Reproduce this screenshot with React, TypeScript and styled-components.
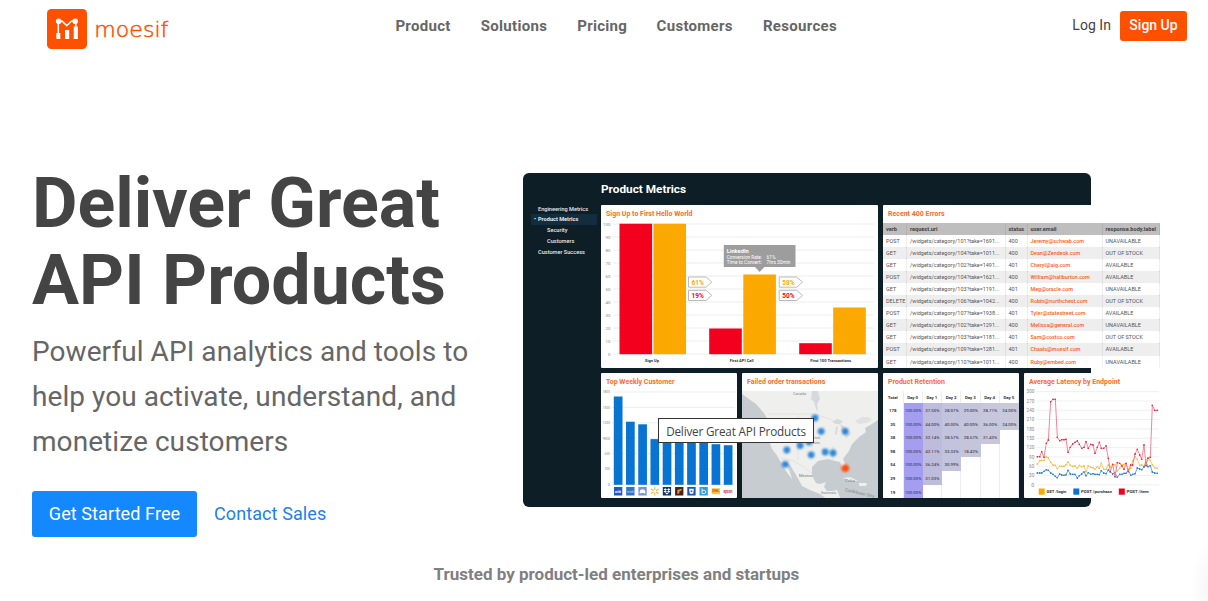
import React from "react";
import styled, { createGlobalStyle } from "styled-components";

const GlobalStyle = createGlobalStyle`
  * { box-sizing: border-box; }
  body { margin: 0; background: #fff; font-family: Roboto, "Liberation Sans", sans-serif; overflow: hidden; }
`;

const Page = styled.div`
  position: relative;
  width: 1208px;
  height: 601px;
  display: flex;
  flex-direction: column;
  overflow: hidden;
`;

const Header = styled.header`
  display: grid;
  grid-template-columns: 348.4px 441.6px 1fr;
  height: 51px;
  padding: 9px 21px 0 47px;
`;

const Brand = styled.a`
  display: flex;
  gap: 7px;
  height: 40px;
`;

const Nav = styled.nav`
  display: flex;
  justify-content: space-between;
  height: 34px;
  align-items: center;
`;

const NavLink = styled.a<{ $width: number }>`
  width: ${(p) => p.$width}px;
  white-space: nowrap;
  font-size: 15px;
  font-weight: 700;
  letter-spacing: 0.3px;
  color: #666;
`;

const Account = styled.div`
  display: flex;
  justify-content: flex-end;
  gap: 9px;
  padding-top: 2px;
`;

const LogIn = styled.a`
  font-size: 14px;
  line-height: 29px;
  letter-spacing: 0.05px;
  color: #444;
`;

const SignUp = styled.a`
  width: 67px;
  height: 30px;
  border-radius: 3px;
  background: #ff5000;
  color: #fff;
  font-size: 14px;
  font-weight: 500;
  line-height: 29px;
  text-align: center;
`;

const Hero = styled.main`
  display: grid;
  grid-template-columns: 491px 1fr;
  height: 513px;
  padding: 113px 0 0 32px;
`;

const Copy = styled.section``;

const Title = styled.h1`
  margin: 0;
  padding-top: 1px;
  font-size: 70px;
  line-height: 77px;
  font-weight: 700;
  color: #444;
  white-space: nowrap;
`;

const Lead = styled.p`
  margin: 10px 0 0;
  font-size: 28px;
  line-height: 45px;
  letter-spacing: 0.07px;
  color: #666;
  white-space: nowrap;
`;

const Actions = styled.div`
  display: flex;
  gap: 17px;
  margin-top: 27px;
  font-size: 18px;
  line-height: 46px;
`;

const PrimaryButton = styled.a`
  width: 165px;
  height: 46px;
  border-radius: 3px;
  background: #1488ff;
  color: #fff;
  text-align: center;
  letter-spacing: 0.1px;
`;

const TextLink = styled.a`
  color: #1a80f5;
  letter-spacing: 0.1px;
`;

const Trusted = styled.h2`
  margin: 0 0 0 433.6px;
  font-size: 17px;
  line-height: 20px;
  font-weight: 700;
  color: #808080;
  white-space: nowrap;
`;

const Dashboard = styled.section`
  position: relative;
  width: 568px;
  height: 334px;
  margin-top: 9px;
  padding-left: 78px;
  display: flex;
  flex-direction: column;
  background: #0e1e27;
  border-radius: 6px;
`;

const DashTitle = styled.h3`
  margin: 0;
  height: 32px;
  font-size: 11.8px;
  line-height: 32px;
  font-weight: 700;
  color: #fff;
`;

const Sidebar = styled.ul`
  position: absolute;
  left: 8px;
  top: 30.5px;
  width: 66px;
  margin: 0;
  padding: 0;
  list-style: none;
`;

const SideItem = styled.li<{ $indent?: boolean; $active?: boolean }>`
  position: relative;
  height: 10.8px;
  line-height: 10.8px;
  padding-left: ${(p) => (p.$indent ? 16 : 7)}px;
  font-size: 5.6px;
  font-weight: ${(p) => (p.$active ? 700 : 500)};
  color: #e6eaec;
  background: ${(p) => (p.$active ? "#132d3f" : "transparent")};
  white-space: nowrap;
`;

const Bullet = styled.span`
  position: absolute;
  left: 3px;
`;

const PanelGrid = styled.div`
  display: grid;
  grid-template-columns: 136px 136px 136px 136px;
  grid-template-rows: 163px 125px;
  gap: 5px;
  width: 559px;
`;

const Panel = styled.article<{ $wide?: boolean }>`
  grid-column: span ${(p) => (p.$wide ? 2 : 1)};
  background: #fff;
  border-radius: 1px;
  overflow: hidden;
`;

const PanelTitle = styled.h4`
  margin: 0;
  height: 18px;
  padding-left: 5px;
  font-size: 7px;
  line-height: 18px;
  font-weight: 700;
  color: #ff6a2b;
  white-space: nowrap;
`;

const Drawing = styled.svg`
  display: block;
  overflow: visible;
  font-family: Roboto, sans-serif;
`;

const MapDrawing = styled(Drawing)`
  overflow: hidden;
`;

const ErrorRow = styled.div<{ $head?: boolean; $striped?: boolean }>`
  display: grid;
  grid-template-columns: 24px 98.5px 22px 75px 1fr;
  height: 12.05px;
  line-height: 12.8px;
  font-size: ${(p) => (p.$head ? 5.6 : 5.5)}px;
  font-weight: ${(p) => (p.$head ? 700 : 400)};
  color: ${(p) => (p.$head ? "#444" : "#555")};
  background: ${(p) => (p.$head ? "#bebebe" : p.$striped ? "#eee" : "#fff")};
`;

const ErrorCell = styled.span<{ $accent?: boolean }>`
  padding-left: 3px;
  border-right: 0.5px solid rgba(0, 0, 0, 0.06);
  white-space: nowrap;
  color: ${(p) => (p.$accent ? "#ff5a17" : "inherit")};
  font-size: ${(p) => (p.$accent ? "5.4px" : "inherit")};
  font-weight: ${(p) => (p.$accent ? 500 : "inherit")};
`;

const RetentionRow = styled.div<{ $head?: boolean }>`
  display: grid;
  grid-template-columns: 20.5px repeat(6, 19.25px);
  height: ${(p) => (p.$head ? 12 : 13.6)}px;
  line-height: ${(p) => (p.$head ? 14 : 16)}px;
  font-size: 4.4px;
  font-weight: 700;
  color: #333;
  text-align: center;
`;

const RetentionCell = styled.span<{ $fill?: string }>`
  background: ${(p) => p.$fill || "#fff"};
  border: 0 solid #ededf0;
  border-width: ${(p) => (p.$fill ? "0" : "0 1px 1px 0")};
  color: ${(p) => (p.$fill ? "#4a4a5c" : "inherit")};
  font-weight: ${(p) => (p.$fill ? 500 : "inherit")};
`;

const Tooltip = styled.div`
  position: absolute;
  left: 658px;
  top: 418px;
  width: 156px;
  height: 25px;
  border: 1px solid #333;
  background: #fff;
  color: #444;
  font-family: "Open Sans", "Noto Sans", sans-serif;
  font-size: 11.7px;
  letter-spacing: -0.16px;
  line-height: 24px;
  text-align: center;
  white-space: nowrap;
`;

const Corner = styled.div`
  position: absolute;
  right: 0;
  bottom: 0;
  width: 18px;
  height: 58px;
  background: radial-gradient(ellipse 18px 50px at 100% 80%, rgba(0, 0, 0, 0.03), rgba(0, 0, 0, 0));
`;

const LogoMark = () => (
  <svg width="40" height="40" viewBox="0 0 40 40">
    <rect width="40" height="40" rx="4.5" fill="#ff5000" />
    <g fill="#fff">
      <circle cx="11.7" cy="12.3" r="2.8" />
      <circle cx="28.2" cy="12.3" r="2.8" />
      <rect x="9.3" y="24" width="4" height="6" />
      <rect x="18" y="21" width="4.2" height="9" />
      <rect x="26.7" y="17.5" width="4.2" height="12.5" />
    </g>
    <path d="M11.3 12V25M28.8 12V18M13 12.3H15.2L19.8 16.6L24.4 12.3H28" fill="none" stroke="#fff" strokeWidth="1.5" />
  </svg>
);

const Wordmark = () => (
  <svg width="76" height="40" viewBox="0 0 76 40">
    <text
      x="0.3" y="28" textLength="74" lengthAdjust="spacingAndGlyphs"
      fontFamily='"DejaVu Sans Light", "DejaVu Sans", sans-serif' fontWeight="200" fontSize="20.5"
      fill="#ff5000" stroke="#ff5000" strokeWidth="0.5"
    >
      moesif
    </text>
  </svg>
);

const Label = ({ x, y, w, size = 4.4, color = "#888", weight = 400, anchor = "start", children }: {
  x: number; y: number; w?: number; size?: number; color?: string; weight?: number;
  anchor?: "start" | "middle" | "end"; children: React.ReactNode;
}) => (
  <text x={x} y={y} textLength={w} lengthAdjust="spacingAndGlyphs" fontSize={size} fill={color} fontWeight={weight} textAnchor={anchor}>
    {children}
  </text>
);

const funnelBars = [
  [18.5, 18.7, "#f2001d"], [52.4, 18.7, "#fba800"],
  [108.2, 123.5, "#f2001d"], [142.3, 69.5, "#fba800"],
  [198.2, 138.2, "#f2001d"], [232.2, 102.5, "#fba800"],
] as const;

const rateTags = [
  [87.5, 72, "61%", "#fba800"], [87.5, 85.3, "19%", "#f2001d"],
  [178.2, 72, "58%", "#fba800"], [178.2, 85.3, "50%", "#f2001d"],
] as const;

const FunnelChart = () => (
  <Drawing width="277" height="145" viewBox="0 18 277 145">
    {Array.from({ length: 11 }, (_, i) => (
      <g key={i}>
        <path d={`M12 ${19 + i * 13}H273`} stroke="#e9e9e9" strokeWidth="0.8" />
        <Label x={9.5} y={20.6 + i * 13} anchor="end">{100 - i * 10}</Label>
      </g>
    ))}
    {funnelBars.map(([x, y, fill]) => (
      <rect key={x} x={x} y={y} width="32.6" height={149.2 - y} fill={fill} />
    ))}
    {rateTags.map(([x, y, text, fill]) => (
      <g key={`${x}-${y}`}>
        <path d={`M${x} ${y}h17.5l5.8 5.1l-5.8 5.1h-17.5z`} fill="#fff" stroke="#bbb" strokeWidth="1" />
        <Label x={x + 3} y={y + 7.5} w={12.3} size={6.4} weight={700} color={fill}>{text}</Label>
      </g>
    ))}
    <path d="M122.8 40H194.5V62H163.3L158.7 67L154 62H122.8Z" fill="#9d9d9d" />
    <Label x={125.8} y={47.6} w={22} size={5.3} weight={700} color="#fff">LinkedIn</Label>
    <Label x={125.8} y={53.6} w={35} size={4.8} color="#fff">Conversion Rate:</Label>
    <Label x={165.5} y={53.6} w={9} size={4.8} color="#fff">61%</Label>
    <Label x={125.8} y={59.3} w={35} size={4.8} color="#fff">Time to Convert:</Label>
    <Label x={165.5} y={59.3} w={24} size={4.8} color="#fff">7hrs 30min</Label>
    <Label x={51} y={156.5} w={14} anchor="middle" weight={700} color="#333">Sign Up</Label>
    <Label x={140.7} y={156.5} w={24} anchor="middle" weight={700} color="#333">First API Call</Label>
    <Label x={229.7} y={156.5} w={41} anchor="middle" weight={700} color="#333">First 100 Transactions</Label>
  </Drawing>
);

const customerTops = [24, 49.2, 51.8, 66.6, 68.5, 69, 69.5, 70, 71.7, 72.7];

const CustomerChart = () => (
  <Drawing width="136" height="107" viewBox="0 18 136 107">
    {Array.from({ length: 7 }, (_, i) => (
      <g key={i}>
        <path d={`M11 ${19 + i * 15.4}H134`} stroke="#e9e9e9" strokeWidth="0.8" />
        <Label x={9} y={20.4 + i * 15.4} w={i === 6 ? 2.3 : i > 3 ? 5.2 : 7.3} anchor="end">{1800 - i * 300}</Label>
      </g>
    ))}
    {customerTops.map((y, i) => (
      <rect key={i} x={12.8 + i * 12.22} y={y - 0.5} width="8.7" height={112.3 - y} fill="#0874d1" />
    ))}
    <g transform="translate(13 114)">
      <rect width="8.3" height="8.5" fill="#205ac2" />
      <Label x={1} y={5.8} w={6} size={3.5} color="#fff" weight={700}>citi</Label>
      <rect x="12.2" width="8.3" height="8.5" fill="#3373c5" />
      <Label x={13} y={5.5} w={6.7} size={3} color="#c7ddf5">intel</Label>
      <rect x="24.4" width="8.3" height="8.5" fill="#7b91da" />
      <path d="M25.7 6.8V4.5C26.5 1.4 30.5 1.4 31.3 4.5V6.8L29.4 6H27.6Z" fill="#fff" />
      <path d="M40.8 0V3M40.8 5.5V8.5M37 2L39.5 3.5M42.1 5L44.6 6.5M37 6.5L39.5 5M42.1 3.5L44.6 2" stroke="#fcb13c" strokeWidth="1.1" />
      <rect x="48.8" width="8.3" height="8.5" fill="#15365f" />
      <path d="M51.3 1.3L53 2.4L51.3 3.5L49.6 2.4ZM54.7 1.3L56.4 2.4L54.7 3.5L53 2.4ZM51.3 3.5L53 4.6L51.3 5.7L49.6 4.6ZM54.7 3.5L56.4 4.6L54.7 5.7L53 4.6ZM53 5.4L54.6 6.4L53 7.4L51.4 6.4Z" fill="#fff" />
      <rect x="61.1" width="8.3" height="8.5" fill="#40251d" />
      <path d="M63.4 7V3L67.5 1.7V3.4L65.3 4.1V6.2Z" fill="#ff9825" />
      <rect x="73.3" width="8.3" height="8.5" fill="#1855b5" />
      <path d="M75 1.7H79.9L79.2 6.7H75.8Z" fill="#fff" />
      <path d="M76.7 3.4H78.3V5H76.7Z" fill="#1855b5" />
      <rect x="85.5" width="8.3" height="8.5" fill="#329be0" />
      <path d="M88 1.5V6.5H90.2A1.6 1.6 0 0 0 90.2 3.3H88" fill="none" stroke="#d9f0ff" strokeWidth="1" />
      <rect x="97.7" y="1.2" width="8.3" height="6" fill="#ffc345" />
      <Label x={98.3} y={5.2} w={7} size={3} color="#c43b25" weight={700}>DHL</Label>
      <Label x={109.4} y={6} w={9} size={4.5} color="#d12e3c" weight={700}>epson</Label>
    </g>
  </Drawing>
);

const failedOrders = [
  [77, 48], [83.2, 61.3], [107.3, 61.5], [48.8, 80], [62.2, 75.5], [71, 72],
  [73.2, 84.8], [87.2, 82], [95, 83], [47.2, 94.3],
];

const OrderMap = () => (
  <MapDrawing width="136" height="107" viewBox="4 21 136 107">
    <defs>
      <filter id="glow" x="-50%" y="-50%" width="200%" height="200%">
        <feGaussianBlur stdDeviation="0.8" />
      </filter>
    </defs>
    <rect x="4" y="21" width="136" height="107" fill="#c6cccf" />
    <path
      d="M4 21V24L11 29L18 34L25 42L29 48L30 58V68L34 79L38 84L42 91L46 98L50 104L54 109L52 102L48 93L52 95L58 105L62 112L64 116L72 120L82 124L90 130H103L99 120L94 121L89 121L86 117L88 112L82 114L78 113L74 106L74 97L80 91L90 89L97 91L102 92L105 99L108 101L108 96L105 89L111 81L114 74L121 67L128 62L127 58L134 54L140 50V21Z"
      fill="#efefed"
    />
    <path d="M74 21L73 29L76 32L78 39L80 42L79 34L82 29L80 21ZM94 52L99 49L105 51L102 54L98 54ZM98 57L100 56L99 64L97 65ZM103 55L107 57L109 60L106 64L103 60ZM107 66L113 62L112 65L108 68Z" fill="#d5d9db" />
    <path d="M117 51L124 47L130 47L134 50L128 53L121 54Z" fill="#dfe2e3" />
    <path d="M105 108L112 107L120 111L114 111ZM121 113L129 113L128 116H121Z" fill="#efefed" />
    <path d="M30 44H76L92 49L108 58M43 88L56 91L67 98L75 104M95 91V76M60 45V90M74 45V80" fill="none" stroke="#d8d9d8" strokeWidth="0.6" />
    <g filter="url(#glow)">
      {failedOrders.map(([x, y]) => <circle key={`${x}-${y}`} cx={x} cy={y} r="3.4" fill="#1377d6" opacity="0.85" />)}
      <circle cx="107.3" cy="98.3" r="3.8" fill="#ff4e08" />
    </g>
    <Label x={55} y={25.2} w={13}>Canada</Label>
    <Label x={73} y={68.7} w={9}>United</Label>
    <Label x={73} y={74} w={9}>States</Label>
    <Label x={61} y={107} w={13} color="#777">Mexico</Label>
    <Label x={107} y={111.5} w={10}>Cuba</Label>
    <Label x={83} y={124} w={15}>Guatemala</Label>
    <g transform="rotate(13 107 120)"><Label x={107} y={121} w={30}>Caribbean Sea</Label></g>
  </MapDrawing>
);

const redLine = "58,260 65,260 71,245 78,262 85,220 91,210 98,95 105,88 112,88 118,202 125,212 131,209 138,209 144,208 150,247 157,232 164,222 171,217 178,213 184,223 191,235 198,232 204,215 211,235 218,223 225,225 231,250 238,232 244,217 250,235 257,235 264,228 271,265 277,305 284,283 291,320 298,278 305,280 312,288 318,298 324,280 331,305 338,285 344,285 351,252 358,238 365,255 371,268 378,225 384,287 390,265 397,262 403,106 410,121 418,121";
const yellowLine = "58,282 65,272 71,271 78,271 85,260 91,264 98,277 105,285 112,286 118,296 125,289 131,289 138,289 144,284 150,276 157,286 164,289 171,288 178,295 184,286 191,290 198,288 204,305 211,287 218,292 225,293 231,298 238,290 244,295 250,280 257,298 264,298 271,285 277,290 284,286 291,284 298,304 305,295 312,284 318,283 324,282 331,298 338,295 344,272 351,260 358,268 365,286 371,285 378,289 384,271 390,263 397,271 403,284 410,293 418,295";
const blueLine = "58,309 65,309 71,309 78,304 85,299 91,301 98,309 105,313 112,319 118,323 125,312 131,315 138,316 144,314 150,301 157,312 164,313 171,313 178,324 184,317 191,312 198,306 204,317 211,308 218,313 225,311 231,313 238,313 244,314 250,302 257,309 264,311 271,300 277,305 284,312 291,308 298,322 305,313 312,313 318,310 324,310 331,300 338,316 344,313 351,311 358,294 365,297 371,299 378,291 384,277 390,290 397,287 403,306 410,309 418,310";

const LatencyChart = () => (
  <Drawing width="136" height="107" viewBox="6 21 136 107">
    <defs>
      {[["dotRed", "#ed2945"], ["dotYellow", "#fbbc42"], ["dotBlue", "#2d83d0"]].map(([id, fill]) => (
        <marker key={id} id={id} viewBox="0 0 2 2" refX="1" refY="1" markerWidth="1.8" markerHeight="1.8" markerUnits="userSpaceOnUse">
          <circle cx="1" cy="1" r="1" fill={fill} />
        </marker>
      ))}
    </defs>
    {Array.from({ length: 11 }, (_, i) => (
      <g key={i}>
        <path d={`M19 ${21.6 + i * 9.33}H141`} stroke="#e9e9e9" strokeWidth="0.7" />
        <Label x={16.3} y={23.2 + i * 9.33} w={i === 10 ? 3 : i > 6 ? 5.3 : 7.7} anchor="end" size={4.8}>{300 - i * 30}</Label>
      </g>
    ))}
    {[
      [yellowLine, "#fcc45c", "dotYellow"], [blueLine, "#5c9ed8", "dotBlue"], [redLine, "#f1788b", "dotRed"],
    ].map(([points, stroke, marker]) => (
      <polyline
        key={marker}
        points={points.split(" ").map((p) => p.split(",").map((n) => (Number(n) / 3).toFixed(2)).join(",")).join(" ")}
        fill="none" stroke={stroke} strokeWidth="0.9"
        markerStart={`url(#${marker})`} markerMid={`url(#${marker})`} markerEnd={`url(#${marker})`}
      />
    ))}
    <rect x="20.7" y="118.5" width="6" height="6.2" fill="#fba800" />
    <Label x={28.5} y={123.2} w={20} weight={700} color="#333">GET /login</Label>
    <rect x="55.3" y="118.5" width="6" height="6.2" fill="#0874d1" />
    <Label x={63} y={123.2} w={31} weight={700} color="#333">POST /purchase</Label>
    <rect x="100.8" y="118.5" width="6" height="6.2" fill="#f2001d" />
    <Label x={108.7} y={123.2} w={22} weight={700} color="#333">POST /item</Label>
  </Drawing>
);

const errors = [
  ["POST", "101?take=1691", "400", "Jeremy@schwab.com", "UNAVAILABLE"],
  ["GET", "104?take=1011", "400", "Dean@Zendesk.com", "OUT OF STOCK"],
  ["GET", "102?take=1491", "401", "Cheryl@aig.com", "AVAILABLE"],
  ["POST", "104?take=1621", "400", "William@haliburton.com", "AVAILABLE"],
  ["GET", "103?take=1191", "401", "Meg@oracle.com", "UNAVAILABLE"],
  ["DELETE", "106?take=1042", "400", "Robin@northchest.com", "OUT OF STOCK"],
  ["POST", "107?take=1938", "401", "Tyler@statestreet.com", "AVAILABLE"],
  ["GET", "102?take=1291", "400", "Melissa@general.com", "UNAVAILABLE"],
  ["GET", "103?take=1181", "401", "Sam@costco.com", "OUT OF STOCK"],
  ["POST", "109?take=1281", "401", "Chaals@moesif.com", "AVAILABLE"],
  ["GET", "110?take=1011", "400", "Ruby@embed.com", "UNAVAILABLE"],
];

const retention = [
  ["178", "100.00%", "37.50%", "28.07%", "29.00%", "28.71%", "24.00%"],
  ["35", "100.00%", "44.00%", "40.00%", "40.00%", "36.00%", "24.00%"],
  ["38", "100.00%", "32.14%", "28.57%", "28.57%", "21.43%", ""],
  ["98", "100.00%", "42.11%", "33.33%", "18.42%", "", ""],
  ["54", "100.00%", "36.24%", "30.99%", "", "", ""],
  ["29", "100.00%", "31.03%", "", "", "", ""],
  ["19", "100.00%", "", "", "", "", ""],
];

const retentionFills = ["#a59df0", "#bdbcdc", "#c2c3dc", "#c4c4db", "#c6c7dc", "#c8c9db"];

export default function App() {
  return (
    <Page>
      <GlobalStyle />
      <Header>
        <Brand><LogoMark /><Wordmark /></Brand>
        <Nav>
          <NavLink $width={56}>Product</NavLink>
          <NavLink $width={67}>Solutions</NavLink>
          <NavLink $width={50}>Pricing</NavLink>
          <NavLink $width={77}>Customers</NavLink>
          <NavLink $width={74}>Resources</NavLink>
        </Nav>
        <Account>
          <LogIn>Log In</LogIn>
          <SignUp>Sign Up</SignUp>
        </Account>
      </Header>
      <Hero>
        <Copy>
          <Title>Deliver Great<br />API Products</Title>
          <Lead>Powerful API analytics and tools to<br />help you activate, understand, and<br />monetize customers</Lead>
          <Actions>
            <PrimaryButton>Get Started Free</PrimaryButton>
            <TextLink>Contact Sales</TextLink>
          </Actions>
        </Copy>
        <Dashboard>
          <DashTitle>Product Metrics</DashTitle>
          <Sidebar>
            <SideItem>Engineering Metrics</SideItem>
            <SideItem $active><Bullet>•</Bullet>Product Metrics</SideItem>
            <SideItem $indent>Security</SideItem>
            <SideItem $indent>Customers</SideItem>
            <SideItem>Customer Success</SideItem>
          </Sidebar>
          <PanelGrid>
            <Panel $wide>
              <PanelTitle>Sign Up to First Hello World</PanelTitle>
              <FunnelChart />
            </Panel>
            <Panel $wide>
              <PanelTitle>Recent 400 Errors</PanelTitle>
              <ErrorRow $head>
                {["verb", "request.uri", "status", "user.email", "response.body.label"].map((h) => <ErrorCell key={h}>{h}</ErrorCell>)}
              </ErrorRow>
              {errors.map(([verb, uri, status, email, label], i) => (
                <ErrorRow key={email} $striped={i % 2 === 1}>
                  <ErrorCell>{verb}</ErrorCell>
                  <ErrorCell>/widgets/category/{uri}...</ErrorCell>
                  <ErrorCell>{status}</ErrorCell>
                  <ErrorCell $accent>{email}</ErrorCell>
                  <ErrorCell>{label}</ErrorCell>
                </ErrorRow>
              ))}
            </Panel>
            <Panel>
              <PanelTitle>Top Weekly Customer</PanelTitle>
              <CustomerChart />
            </Panel>
            <Panel>
              <PanelTitle>Failed order transactions</PanelTitle>
              <OrderMap />
            </Panel>
            <Panel>
              <PanelTitle>Product Retention</PanelTitle>
              <RetentionRow $head>
                {["Total", "Day 0", "Day 1", "Day 2", "Day 3", "Day 4", "Day 5"].map((h) => <RetentionCell key={h}>{h}</RetentionCell>)}
              </RetentionRow>
              {retention.map((row) => (
                <RetentionRow key={row[0]}>
                  {row.map((value, i) => (
                    <RetentionCell key={i} $fill={i > 0 && value ? retentionFills[i - 1] : undefined}>{value}</RetentionCell>
                  ))}
                </RetentionRow>
              ))}
            </Panel>
            <Panel>
              <PanelTitle>Average Latency by Endpoint</PanelTitle>
              <LatencyChart />
            </Panel>
          </PanelGrid>
        </Dashboard>
      </Hero>
      <Trusted>Trusted by product-led enterprises and startups</Trusted>
      <Tooltip>Deliver Great API Products</Tooltip>
      <Corner />
    </Page>
  );
}
